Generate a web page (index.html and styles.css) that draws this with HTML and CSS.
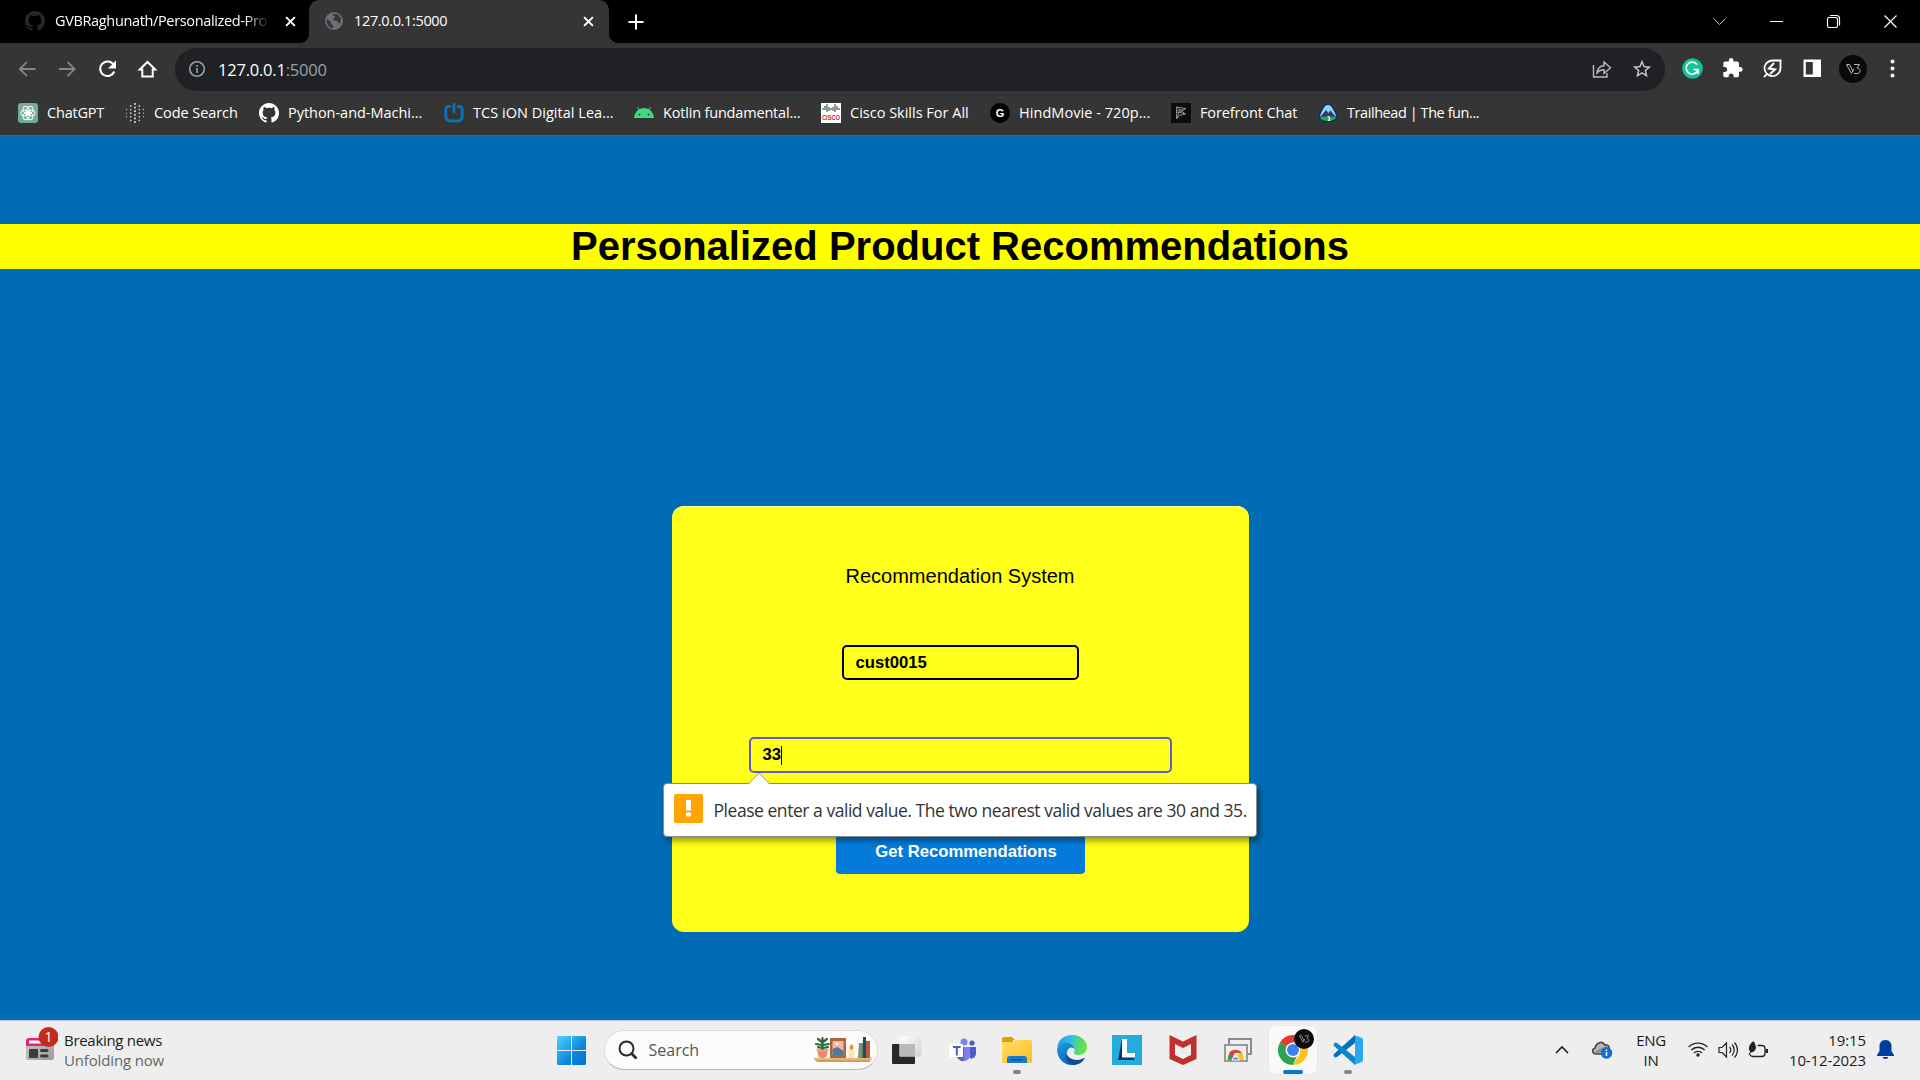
FILE: index.html
```html
<!DOCTYPE html>
<html lang="en">
<head>
<meta charset="utf-8">
<title>127.0.0.1:5000</title>
<link rel="stylesheet" href="styles.css">
</head>
<body>
<svg class="defs" aria-hidden="true">
  <symbol id="github" viewBox="0 0 16 16"><path d="M8 0C3.58 0 0 3.58 0 8c0 3.54 2.29 6.53 5.47 7.59.4.07.55-.17.55-.38 0-.19-.01-.82-.01-1.49-2.01.37-2.53-.49-2.69-.94-.09-.23-.48-.94-.82-1.13-.28-.15-.68-.52-.01-.53.63-.01 1.08.58 1.23.82.72 1.21 1.87.87 2.33.66.07-.52.28-.87.51-1.07-1.78-.2-3.64-.89-3.64-3.95 0-.87.31-1.59.82-2.15-.08-.2-.36-1.02.08-2.12 0 0 .67-.21 2.2.82.64-.18 1.32-.27 2-.27s1.36.09 2 .27c1.53-1.04 2.2-.82 2.2-.82.44 1.1.16 1.92.08 2.12.51.56.82 1.27.82 2.15 0 3.07-1.87 3.75-3.65 3.95.29.25.54.73.54 1.48 0 1.07-.01 1.93-.01 2.2 0 .21.15.46.55.38A8.01 8.01 0 0 0 16 8c0-4.42-3.58-8-8-8z"/></symbol>
  <symbol id="cross" viewBox="0 0 10 10"><path d="M1 1l8 8M9 1l-8 8" fill="none" stroke="#fff" stroke-width="1.8"/></symbol>
  <symbol id="vb" viewBox="0 0 28 28"><circle cx="14" cy="14" r="14" fill="#0a0a0a"/><path d="M7.500 9.500h3l3.500 7M7.500 9.500l5 9 2.500-4.500M15 9.500h5.500l-2.500 3.500c4 0 4 5.500 0 5.500h-3" fill="none" stroke="#b8b8b8" stroke-width="1"/></symbol>
</svg>

<header class="chrome">
  <div class="tabs">
    <div class="tab tab-idle">
      <svg class="favicon" width="20" height="20" fill="#24292e"><use href="#github"/></svg>
      <span class="tab-title fade">GVBRaghunath/Personalized-Pro</span>
      <svg class="tab-close" width="11" height="11"><use href="#cross"/></svg>
    </div>
    <div class="tab tab-active">
      <svg class="favicon" width="18" height="18" viewBox="0 0 18 18"><circle cx="9" cy="9" r="9" fill="#6b7076"/><path d="M2 7l4 3v2l2 1v3.300C4.500 16 2 13 1.700 9.500zM8 2l5 0.500 3 4-1 5-2-1-1-2-3 0-1-2 2-1 0-1.500-2.500-.5z" fill="#35363a"/></svg>
      <span class="tab-title">127.0.0.1:5000</span>
      <svg class="tab-close" width="11" height="11"><use href="#cross"/></svg>
    </div>
    <svg class="plus" width="16" height="16" viewBox="0 0 16 16"><path d="M8 0.500v15M.5 8h15" stroke="#fff" stroke-width="2"/></svg>
    <div class="window-buttons">
      <svg width="57" height="36" viewBox="0 0 57 36" fill="none" stroke="#c8c8c8"><path d="M22.500 15.500l6 6 6-6"/></svg>
      <svg width="57" height="36" viewBox="0 0 57 36" stroke="#fff"><path d="M22 18.500h13"/></svg>
      <svg width="57" height="36" viewBox="0 0 57 36" fill="none" stroke="#fff" stroke-width="1.200"><rect x="22.500" y="14.500" width="10" height="10" rx="1.800"/><path d="M25 12.500h6.500a3 3 0 0 1 3 3v7"/></svg>
      <svg width="57" height="36" viewBox="0 0 57 36" stroke="#fff" stroke-width="1.200"><path d="M22.500 12.500l12 12m0-12l-12 12"/></svg>
    </div>
  </div>

  <div class="toolbar">
    <div class="slots">
      <svg width="40" height="40" viewBox="0 0 40 40" fill="none" stroke="#85868a" stroke-width="1.800"><path d="M28.500 20H13m7-7.200L12.800 20l7.200 7.200"/></svg>
      <svg width="40" height="40" viewBox="0 0 40 40" fill="none" stroke="#85868a" stroke-width="1.800"><path d="M12 20h15.500m-7-7.200l7.200 7.200-7.200 7.200"/></svg>
      <svg width="40" height="40" viewBox="0 0 40 40"><path d="M26.800 16a7.300 7.300 0 1 0 .5 6.500" fill="none" stroke="#fff" stroke-width="2"/><path d="M29 11.500v8h-8z" fill="#fff"/></svg>
      <svg width="40" height="40" viewBox="0 0 40 40"><path d="M12.800 20.500L20.500 13l7.700 7.500h-2.500v7h-10.400v-7z" fill="none" stroke="#fff" stroke-width="2"/></svg>
    </div>
    <div class="omnibox">
      <svg width="18" height="18" viewBox="0 0 18 18" fill="none" stroke="#9aa0a6" stroke-width="1.600"><circle cx="9" cy="9" r="7.300"/><path d="M9 8v5M9 5v1.700"/></svg>
      <span class="url">127.0.0.1<span class="port">:5000</span></span>
      <svg class="share" width="20" height="20" viewBox="0 0 20 20" fill="none" stroke="#b9bbbe" stroke-width="1.400"><path d="M1.500 6v12h13.500v-4M5 14c.5-5 3-7 7-7.200V3l6.500 5.800-6.500 5.700v-3.700c-3 0-5 .7-7 3.200z"/></svg>
      <svg width="22" height="22" viewBox="0 0 24 24" fill="#c6c8cb"><path d="M22 9.240l-7.190-.62L12 2 9.190 8.630 2 9.240l5.460 4.730L5.820 21 12 17.270 18.180 21l-1.630-7.030L22 9.240zM12 15.400l-3.760 2.270 1-4.280-3.320-2.880 4.380-.38L12 6.100l1.710 4.040 4.380.38-3.320 2.880 1 4.280L12 15.400z"/></svg>
    </div>
    <div class="slots">
      <svg width="40" height="40" viewBox="0 0 40 40"><circle cx="20.500" cy="19.500" r="10.300" fill="#15c39a"/><path d="M25 15.500a6 6 0 1 0 1 5h-4.500M26 20.500v4.500" fill="none" stroke="#fff" stroke-width="1.700"/></svg>
      <svg width="40" height="40" viewBox="0 0 40 40"><path transform="translate(9.500 8) scale(.92)" fill="#fff" d="M20.500 11H19V7c0-1.100-.9-2-2-2h-4V3.500C13 2.120 11.880 1 10.500 1S8 2.120 8 3.500V5H4c-1.100 0-1.990.9-1.990 2v3.800H3.500c1.490 0 2.700 1.210 2.700 2.700s-1.210 2.700-2.700 2.700H2V20c0 1.100.9 2 2 2h3.800v-1.500c0-1.490 1.210-2.700 2.700-2.700 1.490 0 2.700 1.210 2.700 2.700V22H17c1.100 0 2-.9 2-2v-4h1.500c1.380 0 2.500-1.120 2.500-2.500S21.880 11 20.500 11z"/></svg>
      <svg width="40" height="40" viewBox="0 0 40 40" fill="none" stroke="#fff" stroke-width="1.800"><path d="M12 28l3-3c-6-7 0-13.500 6-13.500h7.500v7c0 7-7.500 11.500-13.500 6.500"/><path d="M22 14l-5 5.500 6 1-5 4.500" stroke-width="2"/></svg>
      <svg width="40" height="40" viewBox="0 0 40 40"><path d="M11.500 10.500h17.500v17.500H11.500zM13.800 13v12.600h7V13z" fill="#fff" fill-rule="evenodd"/></svg>
      <svg width="40" height="40" viewBox="0 0 40 40"><use href="#vb" x="7" y="6" width="28" height="28"/></svg>
      <svg width="40" height="40" viewBox="0 0 40 40" fill="#fff"><circle cx="20.500" cy="12.500" r="2"/><circle cx="20.500" cy="19.500" r="2"/><circle cx="20.500" cy="26.500" r="2"/></svg>
    </div>
  </div>

  <nav class="bookmarks">
    <a class="bm bm-chatgpt"><svg width="20" height="20" viewBox="0 0 20 20"><rect width="20" height="20" rx="3" fill="#74aa9c"/><g fill="none" stroke="#fff" stroke-width="1"><ellipse cx="10" cy="6.800" rx="3" ry="4" transform="rotate(30 10 10)"/><ellipse cx="10" cy="6.800" rx="3" ry="4" transform="rotate(90 10 10)"/><ellipse cx="10" cy="6.800" rx="3" ry="4" transform="rotate(150 10 10)"/><ellipse cx="10" cy="6.800" rx="3" ry="4" transform="rotate(210 10 10)"/><ellipse cx="10" cy="6.800" rx="3" ry="4" transform="rotate(270 10 10)"/><ellipse cx="10" cy="6.800" rx="3" ry="4" transform="rotate(330 10 10)"/></g></svg><span>ChatGPT</span></a>
    <a class="bm bm-code"><svg width="20" height="20" viewBox="0 0 20 20" fill="none" stroke="#c4c4c4" stroke-linecap="round" stroke-dasharray="0 3.600"><path d="M1.500 6.500v9" stroke-width="1.300"/><path d="M5.700 3v15" stroke-width="1.800"/><path d="M10 1v19" stroke-width="2.200"/><path d="M14.300 3v15" stroke-width="1.800"/><path d="M18.500 6.500v9" stroke-width="1.300"/></svg><span>Code Search</span></a>
    <a class="bm bm-python"><svg width="20" height="20" fill="#fff"><use href="#github"/></svg><span>Python-and-Machi...</span></a>
    <a class="bm bm-tcs"><svg width="20" height="20" viewBox="0 0 20 20" fill="none" stroke="#0873bd" stroke-width="2.800"><path d="M6 3.500H4.500C2.500 3.500 1.800 5 1.800 7v6c0 3.500 1.700 5 5 5h6.400c3.300 0 5-1.500 5-5V7c0-2-.7-3.500-2.700-3.500H14M10 1.500v7.500" stroke-linecap="round"/></svg><span>TCS iON Digital Lea...</span></a>
    <a class="bm bm-kotlin"><svg width="20" height="20" viewBox="0 0 20 20"><path d="M0 15a10 10 0 0 1 20 0z" fill="#3ddc84"/><path d="M3.500 4l2.500 4M16.500 4L14 8" stroke="#3ddc84"/><circle cx="5.500" cy="11.500" r=".9" fill="#35363a"/><circle cx="14.500" cy="11.500" r=".9" fill="#35363a"/></svg><span>Kotlin fundamental...</span></a>
    <a class="bm bm-cisco"><svg width="20" height="20" viewBox="0 0 20 20"><path d="M0 0h20v20H0z" fill="#fff"/><path d="M2 5v2M4 3v4M6 1v8M8 4v4M10 5v2M12 4v4M14 1v8M16 3v4M18 5v2" stroke="#4b6470" stroke-width="1.300"/><text x="10" y="17.200" text-anchor="middle" textLength="18" lengthAdjust="spacingAndGlyphs" class="cisco-text">CISCO</text></svg><span>Cisco Skills For All</span></a>
    <a class="bm bm-hind"><svg width="20" height="20" viewBox="0 0 20 20"><circle cx="10" cy="10" r="10" fill="#000"/><text x="10" y="14" text-anchor="middle" class="g-text">G</text></svg><span>HindMovie - 720p...</span></a>
    <a class="bm bm-fore"><svg width="20" height="20" viewBox="0 0 20 20"><path d="M0 0h20v20H0z" fill="#0c0c0c"/><path d="M5.500 4l9 1.500-3.500 3 3.500 2.500-6.500 1.500L5.500 16zM5.500 8l9-2.500M5.500 4l5.500 4.500-5.500 1M6 15l2-6 6 2" fill="none" stroke="#a5a5a5" stroke-width=".8"/></svg><span>Forefront Chat</span></a>
    <a class="bm bm-trail"><svg width="20" height="20" viewBox="0 0 20 20"><path d="M10 .5c3 0 4.500 2.500 6 5 2 2.500 3.500 5 3.500 8 0 4-4 6-9.500 6s-9.500-2-9.500-6c0-3 1.500-5.500 3.500-8 1.500-2.500 3-5 6-5z" fill="#0b3263"/><path d="M10 2c4 0 5 5 7 8l1 3H2l1-3c2-3 3-8 7-8z" fill="#8bd4f6"/><path d="M3 13l5-6 2.500 3 2-2.500L17 13z" fill="#493066"/><path d="M2 13.500h16c0 3-4 4.500-8 4.500s-8-1.500-8-4.500z" fill="#2ba35c"/><path d="M9 13l2 2-1 3h2l0-3-1-2z" fill="#fff"/></svg><span>Trailhead | The fun...</span></a>
  </nav>
</header>

<main class="page">
  <h1>Personalized Product Recommendations</h1>
  <form class="card">
    <p class="card-title">Recommendation System</p>
    <div class="field field-customer">cust0015</div>
    <div class="field field-number">33<i class="caret"></i>
      <div class="bubble">
        <svg class="bubble-arrow" width="22" height="12" viewBox="0 0 22 12"><path d="M.5 12L11 .8 21.500 12" fill="#fff" stroke="#999"/></svg>
        <svg class="warn" width="29" height="29" viewBox="0 0 29 29"><rect width="29" height="29" rx="2" fill="#ffa400"/><path d="M12 6h5v10.500h-5zM12.800 18.500h3.400l.8.800v2.400l-.8.800h-3.400l-.8-.8v-2.400z" fill="#fff"/></svg>
        <span>Please enter a valid value. The two nearest valid values are 30 and 35.</span>
      </div>
    </div>
    <div class="submit">Get Recommendations</div>
  </form>
</main>

<footer class="taskbar">
  <div class="widget">
    <svg width="32" height="34" viewBox="0 0 32 34"><defs><linearGradient id="news" x2="1" y2="1"><stop stop-color="#c9c9c9"/><stop offset="1" stop-color="#9b9b9b"/></linearGradient></defs><rect x="0" y="12" width="28" height="21" rx="2.500" fill="url(#news)"/><path d="M0 19v-5a3 3 0 0 1 3-3h22a3 3 0 0 1 3 3v5z" fill="#ec1e79"/><path d="M3 13.500h14v3H3z" fill="#fff"/><rect x="3" y="22" width="9" height="9" rx="1" fill="#3b3b3b"/><path d="M15.500 23.500H21M15.500 29H21" stroke="#3b3b3b" stroke-width="3" stroke-linecap="round"/><circle cx="22.500" cy="10" r="10" fill="#c42b1c"/><text x="22.500" y="15" text-anchor="middle" class="badge-text">1</text></svg>
    <div class="widget-text"><span>Breaking news</span><span class="muted">Unfolding now</span></div>
  </div>

  <div class="apps">
    <svg class="start" width="29" height="29" viewBox="0 0 29 29"><defs><linearGradient id="win" gradientUnits="userSpaceOnUse" x2="29" y2="29"><stop stop-color="#4fd5ff"/><stop offset=".6" stop-color="#0e86de"/><stop offset="1" stop-color="#0070d2"/></linearGradient></defs><path d="M1 0h13v14H0V1zM15 0h13l1 1v13H15zM0 15h14v14H1l-1-1zM15 15h14v13l-1 1H15z" fill="url(#win)"/></svg>
    <div class="search">
      <svg width="20" height="20" viewBox="0 0 20 20" fill="none" stroke="#2a2a2a" stroke-width="2"><circle cx="8.500" cy="8.500" r="7"/><path d="M13.500 13.500l5 5" stroke-width="2.600"/></svg>
      <span>Search</span>
      <svg class="shelf" width="60" height="28" viewBox="0 0 60 28"><path d="M0 22h60l-3 3H3z" fill="#e4b678"/><path d="M2 24h55v2H4z" fill="#cf9d60"/><path d="M4 13h11l-1.500 8q-4 2-8 0z" fill="#e98c6a"/><path d="M3.500 12.500h12V15h-12z" fill="#f2a283"/><path d="M9.500 13V2M9 6L5 3M9 9L3 8M10 6l4-3M10 9l6-1M9 12l-4-1M10 12l5-1" stroke="#2d6a3d" stroke-width="2.200" stroke-linecap="round"/><path d="M17 2h16v20H17z" fill="#a9683d"/><path d="M19.500 5h11v14h-11z" fill="#f4b7a2"/><path d="M19.500 13l5-2 6 4v4h-11z" fill="#54779c"/><circle cx="24" cy="8" r="1.500" fill="#fff0c7"/><path d="M35.500 14h6v8h-6z" fill="#fae3bf"/><path d="M38.500 8q4 4 0 6-4-2 0-6z" fill="#f28a24"/><path d="M46 7h4v15h-5z" fill="#79966b"/><path d="M50 1h3v21h-3.500z" fill="#174f63"/><path d="M53 5h4v17h-4z" fill="#b85c3a"/></svg>
    </div>
    <div class="app"><svg width="30" height="30" viewBox="0 0 30 30"><defs><linearGradient id="tv" x2="1" y2="1"><stop stop-color="#fff"/><stop offset="1" stop-color="#d2d2d2"/></linearGradient></defs><rect x="0" y="9" width="23" height="20" rx="1" fill="#282828"/><rect x="7.500" y="1.500" width="22" height="20" rx="1" fill="url(#tv)"/><path d="M7.500 9H23v12.500H7.500z" fill="#b9b9b9"/></svg></div>
    <div class="app"><svg width="30" height="30" viewBox="0 0 30 30"><circle cx="17" cy="7" r="3.500" fill="#7b83eb"/><circle cx="25" cy="8" r="2.600" fill="#5059c9"/><path d="M20 12h9v7q-1 5-6 4.500z" fill="#5059c9"/><path d="M10 12h13v8c0 8-13 8-13 0z" fill="#7b83eb"/><path d="M10 12h7v14q-5 0-7-4z" fill="#5760cc"/><path d="M2 9h14v13H2z" fill="#fff"/><path d="M6 12h7.500M9.800 12v8.500" stroke="#5059c9" stroke-width="2"/></svg></div>
    <div class="app"><svg width="30" height="30" viewBox="0 0 30 30"><defs><linearGradient id="fold" x2="1" y2="1"><stop stop-color="#ffdc6d"/><stop offset="1" stop-color="#ffbf20"/></linearGradient></defs><path d="M0 4q0-2 2-2h8l3 3h-2v6H0z" fill="#dfa000"/><path d="M0 7h11l3-2h14q2 0 2 2v19q0 2-2 2H0z" fill="url(#fold)"/><path d="M5 28v-4q0-3 3-3h14q3 0 3 3v4z" fill="#157bd1"/><path d="M10 25h10" stroke="#0b559d" stroke-width="1.500" stroke-linecap="round"/></svg><i class="mark"></i></div>
    <div class="app"><svg width="30" height="30" viewBox="0 0 30 30"><defs><linearGradient id="e1" x2="1" y2=".2"><stop stop-color="#2390dd"/><stop offset=".45" stop-color="#30bde0"/><stop offset="1" stop-color="#6ae53f"/></linearGradient><linearGradient id="e2" x2=".5" y2="1"><stop stop-color="#1c9fe3"/><stop offset="1" stop-color="#0b62b8"/></linearGradient></defs><path d="M0 13C1 5 7 0 15 0c9 0 15 6 15 12 0 5-4 8-8 8-5 0-6-2-4-5C18 9 5 6 0 13z" fill="url(#e1)"/><path d="M0 14C3 8 8 7 11 8c4 1 7 4 7 7-1-2-3-3-5-2-3 1-4 4-3 8 1 5 5 8 9 8.500C8 32 0 24 0 14z" fill="url(#e2)"/><path d="M10 17c-1 4 4 8 10 8 4 0 6-2 8-2-3 5-7 7-12 7C9 28 7 20 12 14c-1 1-2 2-2 3z" fill="#104b91"/></svg></div>
    <div class="app"><svg width="30" height="30" viewBox="0 0 30 30"><path d="M0 0h30v30H0z" fill="#24acda"/><path d="M10 4L6 25h16l1-3H12z" fill="#073a70"/><path d="M10 4h5v14h8v4.500H10z" fill="#fff"/></svg></div>
    <div class="app"><svg width="30" height="30" viewBox="0 0 30 30"><path d="M1.500 0L15 6.500 28.500 0v24L15 30 1.500 24z" fill="#c0302f"/><path d="M7 9l8 4 8-4v11l-8 4-8-4z" fill="#eee"/></svg></div>
    <div class="app"><svg width="30" height="30" viewBox="0 0 30 30"><path d="M6 4h22v15H6z" fill="#eee" stroke="#8a8a8a" stroke-width="2"/><path d="M2 10h22v16H2z" fill="#efefef" stroke="#999" stroke-width="2"/><path d="M5 25a8 8 0 0 1 3-8l4 8z" fill="#31a350"/><path d="M6 18a8 8 0 0 1 13 0h-7l-3 5z" fill="#e04436"/><path d="M19 18q2 3 1.500 7H13l3-7z" fill="#fbc111"/><path d="M9 25a3.800 3.800 0 0 1 7.500 0z" fill="#4a87ed" stroke="#fff"/></svg></div>
    <div class="app app-current"><svg width="48" height="48" viewBox="0 0 48 48"><path d="M24 24L11 16.500A15 15 0 0 1 37 16.500H24z" fill="#e33b2e"/><path d="M24 24H30.500L24 39A15 15 0 0 1 11 16.500z" fill="#2ba24c"/><path d="M24 16.500H37A15 15 0 0 1 24 39l6.500-11z" fill="#fcc31e"/><circle cx="24" cy="24" r="7.500" fill="#fff"/><circle cx="24" cy="24" r="6" fill="#3b82f0"/><use href="#vb" x="25" y="3" width="20" height="20"/></svg><i class="mark mark-blue"></i></div>
    <div class="app"><svg width="30" height="30" viewBox="0 0 30 30"><path d="M22 0v8L4 22q-1.500 1-3-.5-1-1.500 0-2.500z" fill="#0070b9"/><path d="M22 30v-8L4 8Q2.500 7 1 8.500q-1 1.500 0 2.500z" fill="#0c87cc"/><path d="M21 0l8 3 1 1.500v21L29 27l-8 3 1-2V2z" fill="#2ba7f0"/></svg><i class="mark"></i></div>
  </div>

  <div class="tray">
    <svg width="14" height="10" viewBox="0 0 14 10" fill="none" stroke="#222" stroke-width="1.600"><path d="M1 8l6-6 6 6"/></svg>
    <svg class="cloud" width="21" height="20" viewBox="0 0 21 20"><path d="M4 14C0 14-.5 9 3 8c1-5 7-8 10-3 3-1 5 2 4 5L9 14z" fill="#b5b5b5" stroke="#444" stroke-width="1.500"/><path d="M4 12.500L15.500 7" stroke="#8d8d8d" stroke-width="3"/><circle cx="14.500" cy="13" r="5.800" fill="#1370cc"/><path d="M14.500 12v4M14.500 9.500v1.500" stroke="#fff" stroke-width="1.500"/></svg>
    <div class="lang"><span>ENG</span><span>IN</span></div>
    <svg class="wifi" width="20" height="17" viewBox="0 0 20 17" fill="none" stroke="#222" stroke-width="1.300"><path d="M.7 6a13 13 0 0 1 18.600 0M3.300 9a9.500 9.500 0 0 1 13.400 0M6 12a5.700 5.700 0 0 1 8 0"/><circle cx="10" cy="14" r="1.700" fill="#222" stroke="none"/></svg>
    <svg class="volume" width="20" height="18" viewBox="0 0 20 18" fill="none" stroke="#222" stroke-width="1.200"><path d="M1 6.500h3l4.500-4.500v14L4 11.500H1zM11.500 6a4.500 4.500 0 0 1 0 6M14 3.500a8 8 0 0 1 0 11M16.500 1.500a11 11 0 0 1 0 15"/></svg>
    <svg class="battery" width="20" height="17" viewBox="0 0 20 17"><path d="M9.500 4.500H14q3 0 3 3v5q0 3-3 3H5q-2.500 0-3-2" fill="none" stroke="#222" stroke-width="1.300"/><path d="M17.500 8h2.500v4h-2.500z" fill="#222"/><path d="M5.500 0q3.500 5 2 8.500-1.500 3-5 3Q-2 6 5.500 0z" fill="#222"/><path d="M1 14l4-8" stroke="#222"/></svg>
    <div class="clock"><span>19:15</span><span>10-12-2023</span></div>
    <svg class="bell" width="17" height="20" viewBox="0 0 17 20" fill="#003f9e"><path d="M8.500 0c4 0 6 3 6 6v5l2.500 4v1H0v-1l2.500-4V6c0-3 2-6 6-6zM5.500 17h6q-.5 2-3 2t-3-2z"/></svg>
  </div>
</footer>
</body>
</html>
```
FILE: styles.css
```css
* { box-sizing: border-box; }
body {
  margin: 0;
  width: 1920px;
  height: 1080px;
  overflow: hidden;
  display: flex;
  flex-direction: column;
  background: #006cb5;
  font-family: "Open Sans", "Noto Sans", sans-serif;
}
svg { display: block; flex: none; }
.defs { position: absolute; width: 0; height: 0; }

/* browser frame */
.chrome { height: 136px; flex: none; background: #353535; border-bottom: 1px solid #5c5c5c; color: #fff; }
.tabs { height: 43px; display: flex; background: #000; align-items: center; }
.tab { display: flex; align-items: center; height: 43px; padding-bottom: 1px; }
.tab-idle { width: 309px; padding-left: 25px; border-radius: 0 0 10px 0; background: #000; }
.tab-active {
  width: 300px;
  padding-left: 16px;
  background: #353535;
  border-radius: 10px 10px 0 0;
  position: relative;
}
.tab-active::before, .tab-active::after {
  content: "";
  position: absolute;
  bottom: 0;
  width: 10px;
  height: 10px;
}
.tab-active::before { left: -10px; background: radial-gradient(circle at 0 0, transparent 10px, #353535 10.500px); }
.tab-active::after { right: -10px; background: radial-gradient(circle at 100% 0, transparent 10px, #353535 10.500px); }
.tab-title { font-size: 14.500px; letter-spacing: -0.35px; padding-bottom: 2px; white-space: nowrap; }
.tab-idle .tab-title { width: 215px; margin: 0 15px 0 10px; }
.tab-active .tab-title { width: 214px; margin: 0 15px 0 11px; }
.fade { -webkit-mask-image: linear-gradient(90deg, #000 190px, transparent 215px); mask-image: linear-gradient(90deg, #000 190px, transparent 215px); }
.plus { margin-left: 19px; }
.window-buttons { display: flex; margin-left: auto; padding: 0 1px 1px 0; }

.toolbar { height: 53px; display: flex; align-items: center; padding-left: 7px; }
.slots { display: flex; padding-bottom: 1px; }
.omnibox {
  width: 1490px;
  height: 43px;
  margin: 0 7px 0 8px;
  padding: 0 12px 1px 13px;
  border-radius: 22px;
  background: #202124;
  display: flex;
  align-items: center;
}
.url { margin-left: 12px; font-size: 16.500px; letter-spacing: -0.22px; }
.port { color: #9aa0a6; }
.share { margin: 0 19px 0 auto; }

.bookmarks { display: flex; padding-left: 18px; height: 34px; align-items: center; }
.bm { display: flex; align-items: center; gap: 9px; font-size: 14.500px; white-space: nowrap; }
.bm span { padding-bottom: 2px; }
.bm-chatgpt { width: 107px; letter-spacing: -0.2px; }
.bm-code { width: 134px; letter-spacing: -0.07px; }
.bm-python { width: 185px; letter-spacing: -0.03px; }
.bm-tcs { width: 190px; letter-spacing: 0.03px; }
.bm-kotlin { width: 187px; letter-spacing: -0.18px; }
.bm-cisco { width: 169px; letter-spacing: 0; }
.bm-hind { width: 181px; letter-spacing: 0.05px; }
.bm-fore { width: 147px; letter-spacing: -0.12px; }
.bm-trail { letter-spacing: -0.43px; }
.cisco-text { font: bold 7px "Liberation Sans", sans-serif; letter-spacing: 0; fill: #c1272d; }
.g-text { font: bold 11px "Liberation Sans", sans-serif; fill: #fff; }

/* web page */
.page { height: 884px; flex: none; padding-top: 88px; font-family: "Liberation Sans", Arial, sans-serif; color: #000; }
h1 { margin: 0; height: 45px; line-height: 45px; background: #ff0; text-align: center; font-size: 40px; }
.card {
  width: 577px;
  height: 426px;
  margin: 237px auto 0;
  padding-top: 58px;
  border-radius: 12px;
  background: #ffff19;
  display: flex;
  flex-direction: column;
  align-items: center;
  box-shadow: inset 0 1px #ffff8c;
}
.card-title { margin: 0; font-size: 20px; line-height: 24px; }
.field { font-weight: bold; font-size: 16.670px; border: 2px solid #000; border-radius: 5px; display: flex; align-items: center; padding: 0 12px; }
.field-customer { width: 237px; height: 35px; margin-top: 57px; }
.field-number { width: 423px; height: 36px; margin-top: 57px; border-color: #5b5bd6; position: relative; }
.caret { width: 1px; height: 19px; background: #000; }
.bubble {
  position: absolute;
  left: -88px;
  top: 44px;
  width: 594px;
  height: 54px;
  padding: 0 0 1px 10px;
  display: flex;
  align-items: center;
  gap: 11px;
  background: #fff;
  border: 1px solid #8a8a8a;
  border-radius: 4px;
  box-shadow: 3px 4px 6px rgba(0, 0, 0, 0.4);
  font: 17.500px "Open Sans", "Noto Sans", sans-serif;
  letter-spacing: -0.46px;
  white-space: nowrap;
  color: #333;
}
.bubble-arrow { position: absolute; left: 84px; top: -12px; }
.warn { margin-bottom: 2px; }
.submit { width: 249px; height: 46px; margin-top: 55px; padding-left: 12px; background: #047bdb; color: #fff; border-radius: 4px; font-weight: bold; font-size: 16.670px; line-height: 48px; text-align: center; }

/* taskbar */
.taskbar { height: 60px; flex: none; background: #eee; border-top: 1px solid #bdc3c8; display: flex; color: #1b1b1b; font-size: 15px; line-height: 20px; }
.widget { width: 557px; padding: 6px 0 0 26px; display: flex; gap: 6px; }
.widget-text { display: flex; flex-direction: column; padding-top: 3px; letter-spacing: -0.3px; }
.widget-text .muted { letter-spacing: -0.15px; }
.muted { color: #666; }
.badge-text { font-size: 14px; fill: #fff; }
.apps { display: flex; align-items: center; padding-bottom: 1px; }
.search {
  width: 274px;
  height: 40px;
  margin: 0 2px 0 17.500px;
  padding: 0 4px 0 13px;
  border: 1px solid #dcdcdc;
  border-bottom-color: #bbb;
  border-radius: 20px;
  background: #fbfbfb;
  display: flex;
  align-items: center;
  color: #555;
  font-size: 16px;
}
.search span { margin-left: 11px; }
.shelf { margin-left: auto; }
.app { width: 55.100px; height: 58px; display: flex; align-items: center; justify-content: center; position: relative; }
.app-current svg { background: #f9f9f9; border-radius: 5px; box-shadow: 0 0 1px #bbb; }
.mark { position: absolute; bottom: 5px; left: 50%; width: 8px; height: 4px; margin-left: -4px; border-radius: 2px; background: #868686; }
.mark-blue { width: 20px; margin-left: -10px; background: #0078d4; }
.tray { margin-left: auto; padding: 0 26px 2px 0; display: flex; align-items: center; }
.cloud { margin-left: 23px; }
.lang, .clock { display: flex; flex-direction: column; }
.lang { width: 32px; margin-left: 22px; align-items: center; letter-spacing: -0.3px; }
.wifi { margin-left: 21px; }
.volume { margin-left: 10px; }
.battery { margin-left: 10px; }
.clock { width: 98px; align-items: flex-end; letter-spacing: -0.12px; }
.bell { margin-left: 11px; }
```
